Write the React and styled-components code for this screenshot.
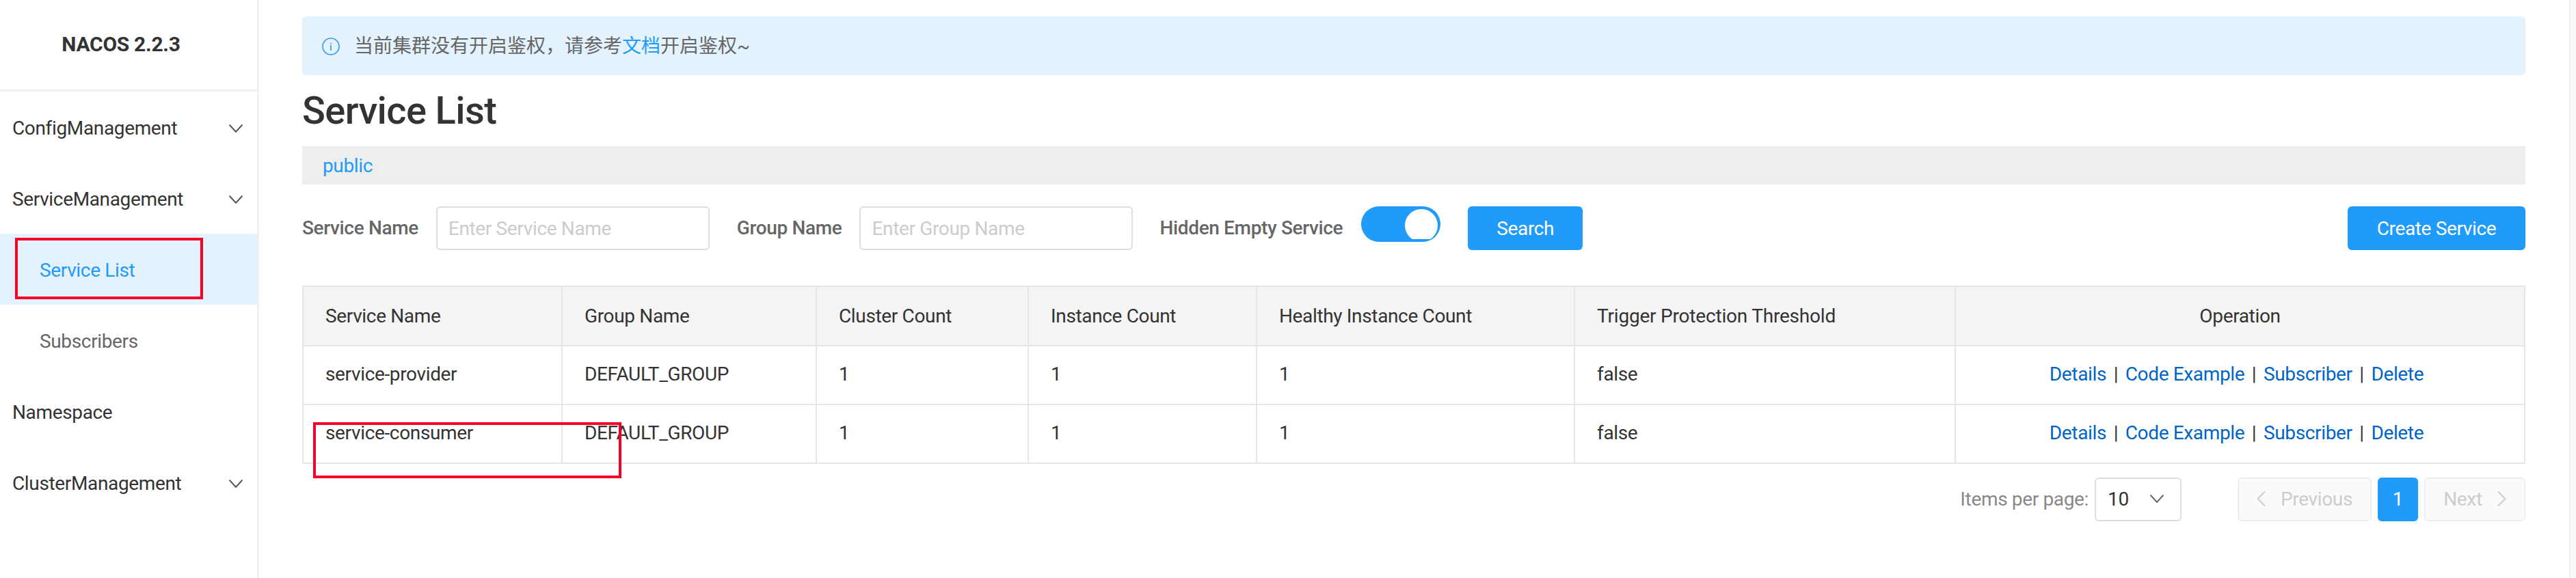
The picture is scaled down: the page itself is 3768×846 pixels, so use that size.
import React from "react";
import styled, { createGlobalStyle } from "styled-components";

const Global = createGlobalStyle`
  html, body { margin: 0; padding: 0; background: #fff; overflow: hidden; }
  * { box-sizing: border-box; }
  body { font-family: Roboto, "Noto Sans CJK SC", sans-serif; font-size: 28px; color: #333; letter-spacing: -0.35px; }
`;

const Page = styled.div`
  position: relative;
  display: flex;
  width: 3768px;
  height: 846px;
  overflow: hidden;
`;

const Sidebar = styled.aside`
  flex: 0 0 379px;
  border-right: 3px solid #f2f2f2;
`;

const Brand = styled.div`
  height: 134px;
  border-bottom: 3px solid #f0f0f0;
  display: flex;
  align-items: center;
  justify-content: center;
  font-weight: 700;
  font-size: 30px;
  letter-spacing: -0.3px;
  color: #333;
  padding: 0 22px 2px 0;
`;

const NavItem = styled.div`
  height: 104px;
  display: flex;
  align-items: center;
  justify-content: space-between;
  padding: 3px 21px 0 18px;
  color: #333;
`;

const SubItem = styled.div`
  height: 104px;
  display: flex;
  align-items: center;
  padding: 3px 0 0 58px;
  color: ${(p) => (p.$active ? "#209bfa" : "#666")};
  background: ${(p) => (p.$active ? "#e3f2fd" : "transparent")};
`;

const Main = styled.main`
  flex: 1;
  padding: 24px 64px 0 63px;
  min-width: 0;
`;

const ScrollTrack = styled.div`
  flex: 0 0 10px;
  background: #fafafa;
  border-left: 2px solid #eee;
`;

const Alert = styled.div`
  height: 86px;
  background: #e3f2fd;
  border-radius: 6px;
  display: flex;
  align-items: center;
  padding: 0 0 4px 29px;
  gap: 21px;
  color: #666;
  letter-spacing: 0;
`;

const AlertIcon = styled.svg`
  width: 26px;
  height: 26px;
  margin-top: 5px;
  flex: none;
`;

const BlueLink = styled.span`
  color: #209bfa;
`;

const Title = styled.h1`
  margin: 0;
  height: 104px;
  line-height: 104px;
  font-size: 56px;
  font-weight: 500;
  letter-spacing: -0.6px;
  color: #333;
`;

const NamespaceBar = styled.div`
  height: 56px;
  background: #eee;
  display: flex;
  align-items: center;
  padding-left: 30px;
  color: #209bfa;
`;

const FormRow = styled.div`
  display: flex;
  align-items: flex-start;
  margin-top: 32px;
  height: 64px;
`;

const Label = styled.label`
  font-weight: 500;
  color: #666;
  line-height: 64px;
  margin-left: ${(p) => p.$ml || 0}px;
`;

const Input = styled.input`
  height: 64px;
  width: ${(p) => p.$w}px;
  margin-left: 26px;
  border: 2px solid #ddd;
  border-radius: 6px;
  padding: 0 16px;
  font: 28px Roboto, sans-serif;
  letter-spacing: -0.35px;
  color: #333;
  outline: none;
  &::placeholder { color: #ccc; opacity: 1; }
`;

const Switch = styled.div`
  width: 116px;
  height: 52px;
  margin-left: 27px;
  background: #209bfa;
  border-radius: 26px;
  padding: 4px;
  display: flex;
  justify-content: flex-end;
`;

const KnobClip = styled.div`
  width: 48px;
  height: 44px;
  overflow: hidden;
`;

const Knob = styled.div`
  width: 48px;
  height: 48px;
  background: #fff;
  border-radius: 50%;
`;

const PrimaryButton = styled.button`
  height: 64px;
  width: ${(p) => p.$w}px;
  margin-left: ${(p) => p.$ml || "0"};
  border: none;
  border-radius: 6px;
  background: #209bfa;
  color: #fff;
  font: 28px Roboto, sans-serif;
  letter-spacing: -0.35px;
  padding: 0;
`;

const Table = styled.table`
  margin-top: 52px;
  width: 3252px;
  table-layout: fixed;
  border-collapse: collapse;
  border: 2px solid #e6e6e6;
`;

const Th = styled.th`
  height: 87px;
  background: #f4f4f4;
  border: 2px solid #e6e6e6;
  font-weight: 400;
  color: #333;
  padding: 0 32px;
  letter-spacing: ${(p) => (p.$wide ? "-0.2px" : "inherit")};
  text-align: ${(p) => (p.$center ? "center" : "left")};
`;

const Td = styled.td`
  height: 86px;
  border: 2px solid #e6e6e6;
  padding: 0 32px 3px;
  color: #333;
  text-align: left;
`;

const ActionCell = styled.td`
  height: 86px;
  border: 2px solid #e6e6e6;
  padding: 0 37px 3px 27px;
  text-align: center;
`;

const OpLink = styled.a`
  color: #0064c8;
`;

const Sep = styled.span`
  margin: 0 4px;
  color: #333;
`;

const Pagination = styled.div`
  display: flex;
  align-items: center;
  justify-content: flex-end;
  margin-top: 20px;
  height: 64px;
`;

const PageLabel = styled.span`
  color: #888;
  margin-right: 9px;
  padding-bottom: 2px;
`;

const Select = styled.div`
  width: 127px;
  height: 64px;
  border: 2px solid #ddd;
  border-radius: 6px;
  display: flex;
  align-items: center;
  justify-content: space-between;
  padding: 0 24px 2px 17px;
  margin-right: 82px;
  color: #333;
`;

const PageButton = styled.div`
  height: 64px;
  width: ${(p) => p.$w}px;
  background: #fafafa;
  border: 2px solid #eee;
  border-radius: 6px;
  color: #ccc;
  display: flex;
  align-items: center;
  justify-content: center;
  gap: 22px;
  padding-bottom: 2px;
`;

const CurrentPage = styled.div`
  height: 64px;
  width: 59px;
  margin: 0 9px;
  background: #209bfa;
  border-radius: 6px;
  color: #fff;
  display: flex;
  align-items: center;
  justify-content: center;
  padding-bottom: 2px;
`;

const Glyph = styled.svg`
  flex: none;
  fill: none;
  stroke: ${(p) => p.$color};
  stroke-width: 2;
`;

const RedBox = styled.div`
  position: absolute;
  left: ${(p) => p.$x}px;
  top: ${(p) => p.$y}px;
  width: ${(p) => p.$w}px;
  height: ${(p) => p.$h}px;
  border: 4px solid #f40028;
`;

const ChevronDown = ({ color = "#555" }) => (
  <Glyph $color={color} width="20" height="12" viewBox="0 0 20 12">
    <path d="M0.5 0.5 L10 11 L19.5 0.5" />
  </Glyph>
);

const ChevronLeft = () => (
  <Glyph $color="#ccc" width="13" height="22" viewBox="0 0 13 22">
    <path d="M12 0.5 L1.5 11 L12 21.5" />
  </Glyph>
);

const ChevronRight = () => (
  <Glyph $color="#ccc" width="13" height="22" viewBox="0 0 13 22">
    <path d="M1 0.5 L11.5 11 L1 21.5" />
  </Glyph>
);

const columns = [
  ["Service Name", 379],
  ["Group Name", 372],
  ["Cluster Count", 310],
  ["Instance Count", 334],
  ["Healthy Instance Count", 465],
  ["Trigger Protection Threshold", 557],
];

const services = ["service-provider", "service-consumer"];

export default function App() {
  return (
    <Page>
      <Global />
      <Sidebar>
        <Brand>NACOS 2.2.3</Brand>
        <NavItem>ConfigManagement<ChevronDown /></NavItem>
        <NavItem>ServiceManagement<ChevronDown /></NavItem>
        <SubItem $active>Service List</SubItem>
        <SubItem>Subscribers</SubItem>
        <NavItem>Namespace</NavItem>
        <NavItem>ClusterManagement<ChevronDown /></NavItem>
      </Sidebar>
      <Main>
        <Alert>
          <AlertIcon viewBox="0 0 26 26">
            <circle cx="13" cy="13" r="12" fill="none" stroke="#2f97f3" strokeWidth="1.6" />
            <rect x="12.2" y="7.5" width="1.6" height="2" fill="#2f97f3" />
            <rect x="12.2" y="11" width="1.6" height="8" fill="#2f97f3" />
          </AlertIcon>
          <span>当前集群没有开启鉴权，请参考<BlueLink>文档</BlueLink>开启鉴权~</span>
        </Alert>
        <Title>Service List</Title>
        <NamespaceBar>public</NamespaceBar>
        <FormRow>
          <Label>Service Name</Label>
          <Input $w={400} placeholder="Enter Service Name" />
          <Label $ml={40}>Group Name</Label>
          <Input $w={400} placeholder="Enter Group Name" />
          <Label $ml={39}>Hidden Empty Service</Label>
          <Switch>
            <KnobClip><Knob /></KnobClip>
          </Switch>
          <PrimaryButton $w={168} $ml="40px">Search</PrimaryButton>
          <PrimaryButton $w={260} $ml="auto">Create Service</PrimaryButton>
        </FormRow>
        <Table>
          <colgroup>
            {columns.map(([name, width]) => (
              <col key={name} width={width} />
            ))}
            <col />
          </colgroup>
          <thead>
            <tr>
              {columns.map(([name]) => (
                <Th key={name} $wide={name.length > 24}>{name}</Th>
              ))}
              <Th $center>Operation</Th>
            </tr>
          </thead>
          <tbody>
            {services.map((name) => (
              <tr key={name}>
                <Td>{name}</Td>
                <Td>DEFAULT_GROUP</Td>
                <Td>1</Td>
                <Td>1</Td>
                <Td>1</Td>
                <Td>false</Td>
                <ActionCell>
                  <OpLink>Details</OpLink><Sep> | </Sep><OpLink>Code Example</OpLink><Sep> | </Sep><OpLink>Subscriber</OpLink><Sep> | </Sep><OpLink>Delete</OpLink>
                </ActionCell>
              </tr>
            ))}
          </tbody>
        </Table>
        <Pagination>
          <PageLabel>Items per page:</PageLabel>
          <Select>10<ChevronDown color="#666" /></Select>
          <PageButton $w={196}><ChevronLeft />Previous</PageButton>
          <CurrentPage>1</CurrentPage>
          <PageButton $w={148}>Next<ChevronRight /></PageButton>
        </Pagination>
      </Main>
      <ScrollTrack />
      <RedBox $x={22} $y={348} $w={275} $h={90} />
      <RedBox $x={458} $y={618} $w={451} $h={82} />
    </Page>
  );
}
